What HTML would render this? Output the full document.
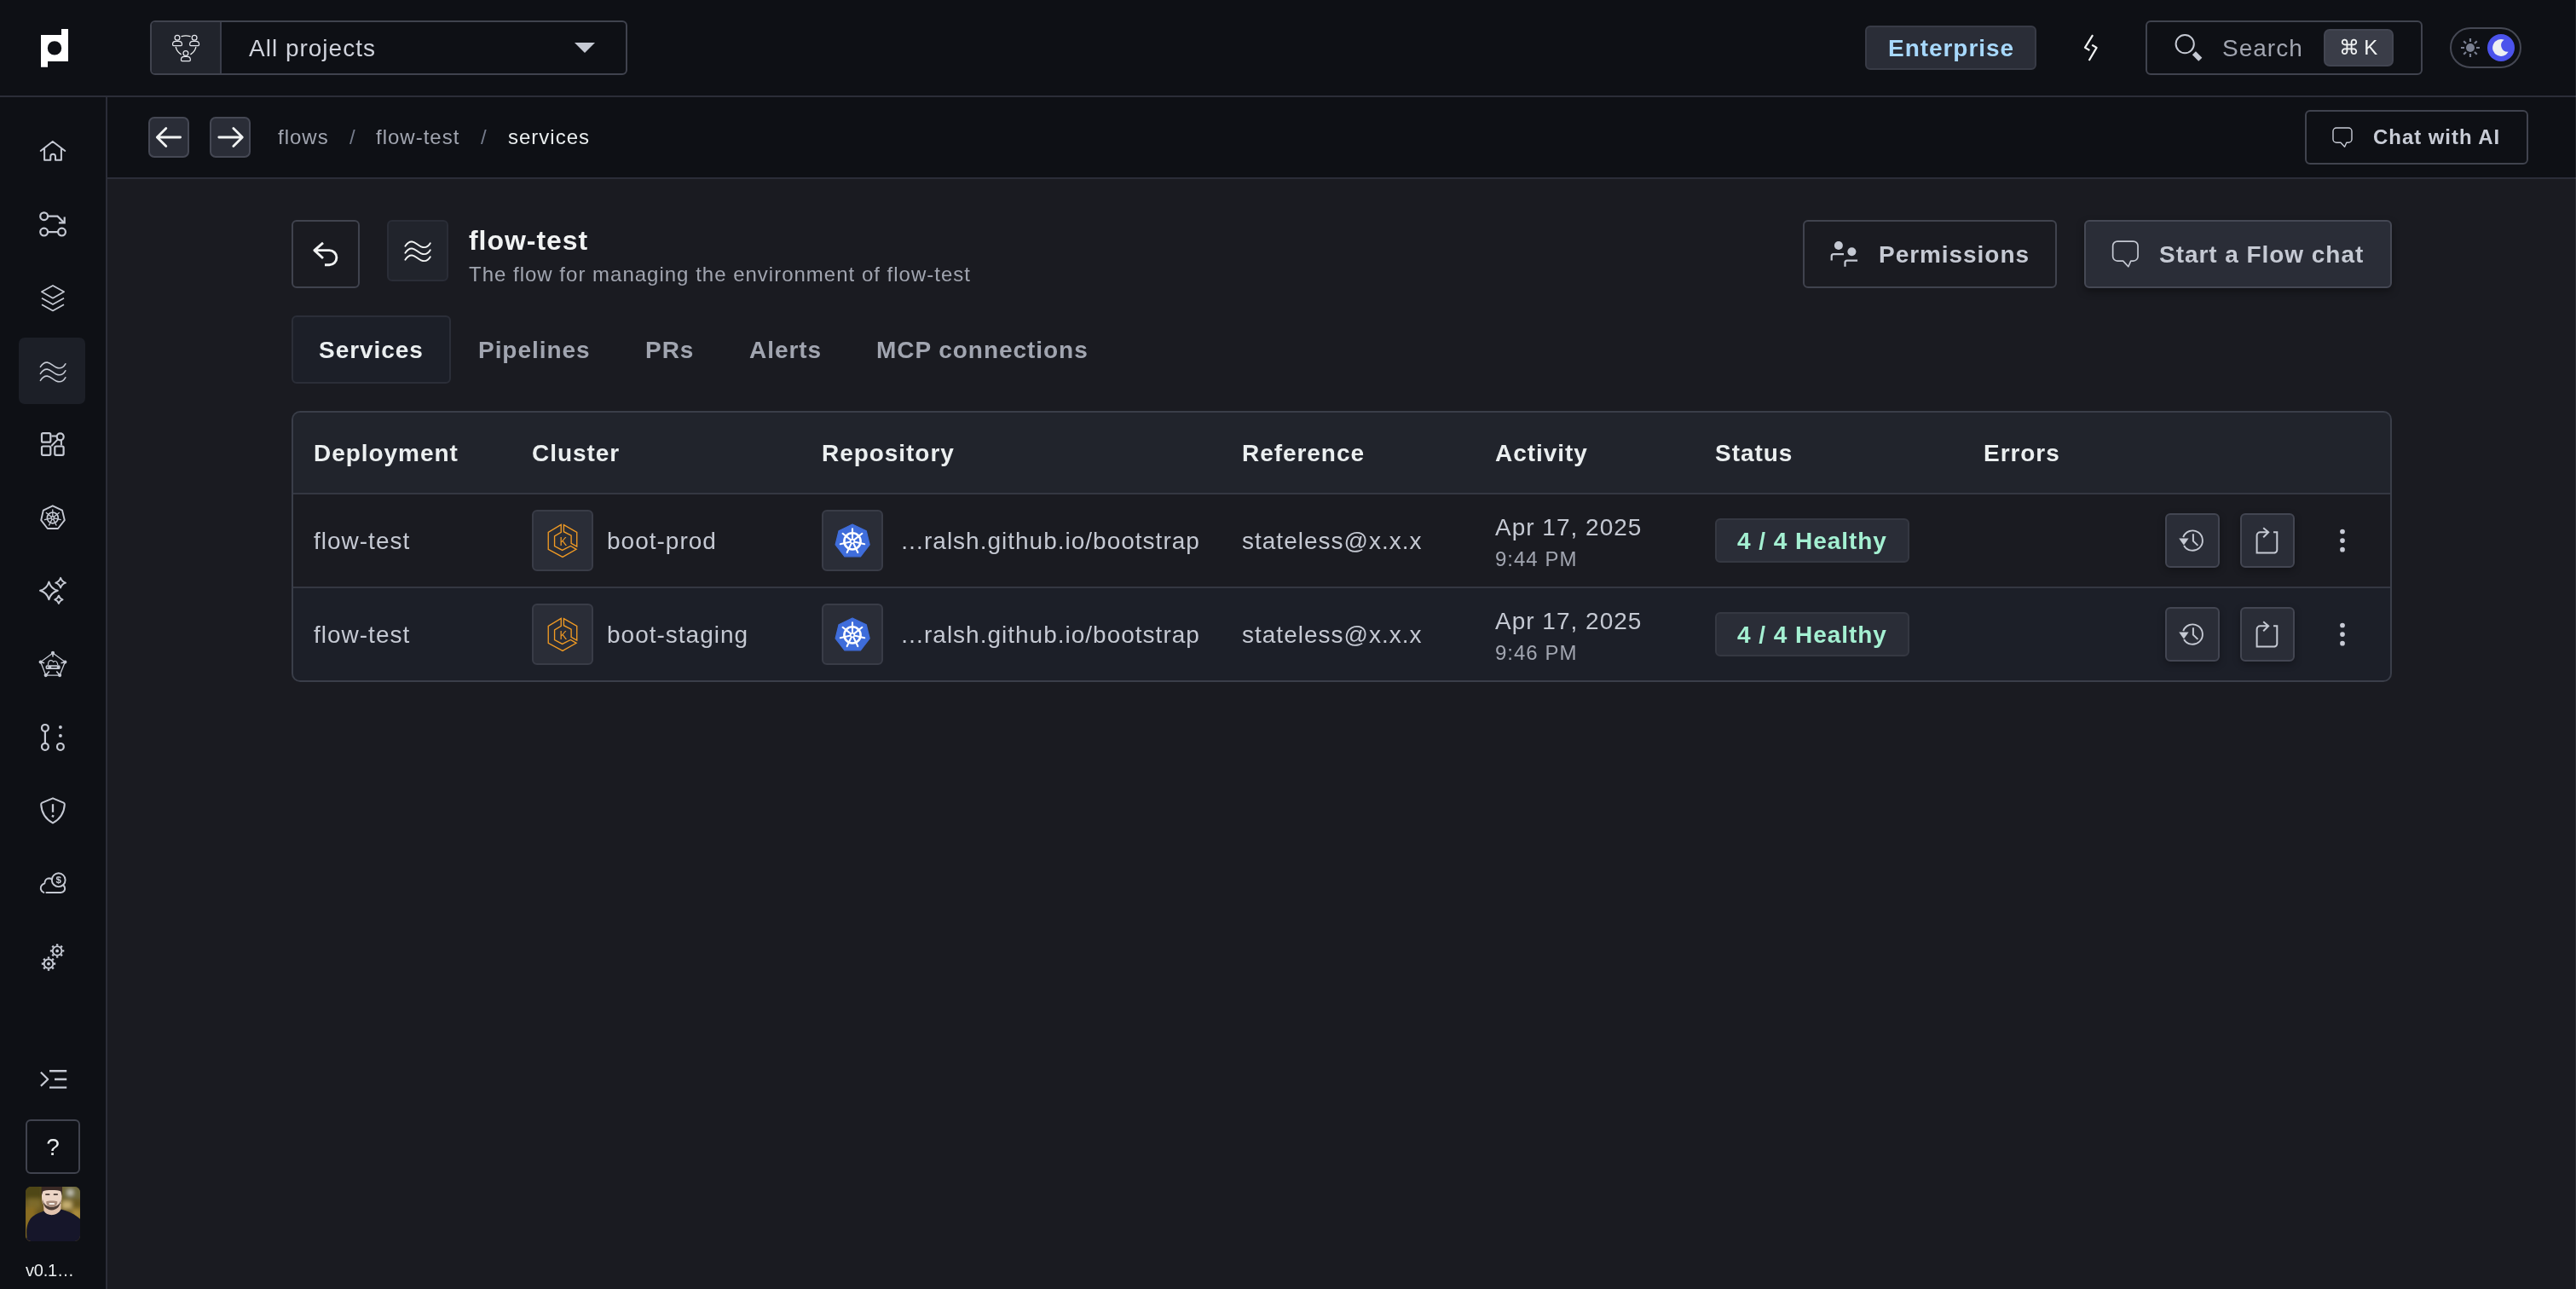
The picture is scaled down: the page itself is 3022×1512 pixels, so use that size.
<!DOCTYPE html>
<html lang="en">
<head>
<meta charset="utf-8">
<title>flow-test services</title>
<style>
html,body{margin:0;padding:0;background:#0e1015;}
body{width:3022px;height:1512px;overflow:hidden;position:relative;font-family:"Liberation Sans",sans-serif;letter-spacing:1px;color:#ebeff0;font-size:28px;}
*{box-sizing:border-box;}
.a{position:absolute;}
.t{will-change:transform;position:absolute;white-space:nowrap;line-height:40px;height:40px;}
.b{font-weight:bold;letter-spacing:0.95px;}
svg{position:absolute;overflow:visible;}
.ic{fill:none;stroke:#c5c9d3;stroke-width:1.1;stroke-linecap:round;stroke-linejoin:round;}
/* layout */
#header{left:0;top:0;width:3022px;height:114px;background:#0e1015;border-bottom:2px solid #2b2d38;}
#sidebar{left:0;top:114px;width:126px;height:1398px;background:#0e1015;border-right:2px solid #2b2d38;}
#subheader{left:126px;top:114px;width:2896px;height:96px;background:#0e1015;border-bottom:2px solid #2b2d38;}
#content{left:126px;top:210px;width:2896px;height:1302px;background:#1a1b21;}
.s24{font-size:24px;}
.nb{width:48px;height:48px;background:#2a2d37;border:2px solid #454854;border-radius:7px;}
.ib{width:72px;height:72px;background:#2a2d37;border:2px solid #393c47;border-radius:6px;}
.ab{width:64px;height:64px;background:#2a2d37;border:2px solid #434652;border-radius:6px;box-shadow:0 3px 8px rgba(0,0,0,.3);}
.box{position:absolute;border:2px solid #40434e;border-radius:6px;}
</style>
</head>
<body>
<div id="header" class="a"></div>
<div id="sidebar" class="a"></div>
<div id="subheader" class="a"></div>
<div id="content" class="a"></div>

<!-- HEADER -->
<svg style="left:48px;top:33.6px" width="32" height="44.8" viewBox="0 0 32 44.8"><path fill="#ffffff" fill-rule="evenodd" d="M24 0H32V38H8V44.8H0V7H24Z M7.8 22.4a8.2 8.2 0 1 0 16.4 0a8.2 8.2 0 1 0 -16.4 0Z"/></svg>
<div class="box" style="left:176px;top:24px;width:560px;height:64px;"></div>
<div class="a" style="left:178px;top:26px;width:80px;height:60px;background:#21242c;border-radius:4px 0 0 4px;"></div>
<div class="a" style="left:258px;top:26px;width:2px;height:60px;background:#3a3d49;"></div>
<div class="t" style="left:292px;top:37px;color:#d0d3dc;">All projects</div>
<svg style="left:674px;top:50px" width="24" height="12" viewBox="0 0 24 12"><path fill="#c5c9d3" d="M0 0H24L12 12Z"/></svg>

<div class="a" style="left:2188px;top:30px;width:201px;height:52px;background:#2a2d37;border:2px solid #383b46;border-radius:6px;"></div>
<div class="t b" style="left:2215px;top:37px;color:#a7d8fc;">Enterprise</div>
<div class="box" style="left:2517px;top:24px;width:325px;height:64px;"></div>
<div class="t" style="left:2607px;top:37px;color:#a1a5b0;">Search</div>
<div class="a" style="left:2726px;top:34px;width:82px;height:44px;background:#3a3d48;border:2px solid #424551;border-radius:7px;"></div>
<div class="t" style="left:2743.600px;top:35.800px;color:#f1f3f3;font-size:24px;word-spacing:-3.5px;">⌘ K</div>
<div class="a" style="left:2874px;top:32px;width:84px;height:48px;border:2px solid #454854;border-radius:24px;"></div>
<div class="a" style="left:2918px;top:40px;width:32px;height:32px;border-radius:16px;background:#4b53ec;"></div>
<!-- SIDEBAR -->
<div class="a" style="left:22px;top:396px;width:78px;height:78px;background:#1c1f27;border-radius:7px;"></div>
<div class="box" style="left:30px;top:1313px;width:64px;height:64px;"></div>
<div class="t" style="left:30px;top:1325.600px;width:64px;text-align:center;letter-spacing:0;color:#ebeff0;">?</div>
<svg style="left:30px;top:1392px" width="64" height="64" viewBox="0 0 64 64"><defs><clipPath id="avc"><rect width="64" height="64" rx="6.5"/></clipPath><filter id="avb" x="-20%" y="-20%" width="140%" height="140%"><feGaussianBlur stdDeviation="2.4"/></filter><filter id="avs" x="-10%" y="-10%" width="120%" height="120%"><feGaussianBlur stdDeviation="0.55"/></filter></defs><g clip-path="url(#avc)"><rect width="64" height="64" fill="#6a5620"/><g filter="url(#avb)"><rect x="-4" y="-4" width="24" height="20" fill="#4f4718"/><rect x="2" y="14" width="16" height="12" fill="#7d6a2c"/><rect x="-2" y="24" width="14" height="44" fill="#8a6d24"/><rect x="42" y="-4" width="26" height="18" fill="#6f6a3c"/><circle cx="52.500" cy="7" r="3.200" fill="#d8d8cc"/><rect x="44" y="14" width="24" height="14" fill="#6a5a22"/><rect x="42" y="17" width="12" height="9" fill="#c9b273"/><rect x="54" y="26" width="12" height="14" fill="#a98a3a"/></g><g filter="url(#avs)"><path d="M21 20L21.500 29C25 35.500 37.500 35.500 41.500 27L41.500 20Z" fill="#e2c3ae"/><path d="M-5 72L1.500 60C0 48 3 39 9 34.500C13 31.500 17 30 21.500 28.500C25 35 37.500 35 41.500 26.500C48 28.500 56 31 61 35.500C64 38 67 40 69 43V72Z" fill="#151929"/><path d="M19 0H42.500V12C42.500 21 38 27.200 30.600 27.200C23.500 27.200 19 21 19 12Z" fill="#ecd5c6"/><path d="M18.600 11V0H43V11L41.300 5.500C38 3.600 23.500 3.600 20.300 5.500Z" fill="#3a2c25"/><path d="M20 14.500C20.500 23 24.500 27.400 30.600 27.400C36.800 27.400 41 23 41.700 14.500C40.500 20.500 37 23.600 30.700 23.600C24.500 23.600 21.200 20.500 20 14.500Z" fill="#4d3e36"/><path d="M24.200 17.600C26 16.200 35.300 16.200 37.300 17.600C37.300 21.500 35 24 30.700 24C26.500 24 24.200 21.500 24.200 17.600Z" fill="#a88c7c"/><rect x="27.400" y="18.900" width="6.800" height="2.100" rx="1" fill="#f3eee8"/><rect x="23.300" y="8.300" width="5" height="1.600" fill="#3b2d27"/><rect x="32.800" y="8.300" width="5" height="1.600" fill="#3b2d27"/></g></g></svg>
<div class="t" style="left:30px;top:1470px;font-size:20px;letter-spacing:-0.2px;color:#ebeff0;">v0.1…</div>
<svg style="left:0;top:0" width="126" height="1512" viewBox="0 0 126 1512"><path d="M47.7 177L61.8 166L76.3 177M52.1 174V187.8H59.3V183.6a2.85 2.85 0 0 1 5.7 0V187.8H71.9V174" fill="none" stroke="#c5c9d3" stroke-width="2.0" stroke-linejoin="round" stroke-linecap="round"/>
<g fill="none" stroke="#c5c9d3" stroke-width="2.2"><circle cx="51.65" cy="253.7" r="4.4"/><circle cx="51.65" cy="272.1" r="4.4"/><circle cx="72.5" cy="272.1" r="4.4"/><path d="M56 272.1H68.1M56 253.7H67.5L74.9 261"/><path d="M75.7 254.6V261.4H68.9" stroke-linejoin="miter"/></g>
<path d="M62 334.9L75.1 342.3L62 349.7L48.9 342.3Z" fill="none" stroke="#c5c9d3" stroke-width="1.7" stroke-linejoin="round" />
<path d="M49 349.8L62 357.1L75 349.8M49 357.2L62 364.5L75 357.2" fill="none" stroke="#c5c9d3" stroke-width="1.7" stroke-linejoin="round" />
<path d="M47.4 430.3C50 426.1 53 424.90000000000003 55.5 425.1C59 425.40000000000003 62 429.1 66 430.90000000000003C70 432.6 74 431.6 76.8 426.8M47.4 438.3C50 434.1 53 432.90000000000003 55.5 433.1C59 433.40000000000003 62 437.1 66 438.90000000000003C70 440.6 74 439.6 76.8 434.8M47.4 446.3C50 442.1 53 440.90000000000003 55.5 441.1C59 441.40000000000003 62 445.1 66 446.90000000000003C70 448.6 74 447.6 76.8 442.8" fill="none" stroke="#c5c9d3" stroke-width="1.6" stroke-linejoin="round" stroke-linecap="round"/>
<g fill="none" stroke="#c5c9d3" stroke-width="2.2"><rect x="49" y="508.2" width="10.3" height="10.5" rx="1.5"/><rect x="49" y="523.5" width="10.3" height="10.3" rx="1.5"/><rect x="64.3" y="523.5" width="10.3" height="10.3" rx="1.5"/><circle cx="70.7" cy="512.3" r="4"/><path d="M60.4 511.6H66.7M67.6 515.6L60.2 523.2M71.9 516.3V522.4" stroke-width="2"/></g>
<path d="M61.8 593.3L73 598.6L75.8 610.2L68 620H55.8L48.2 610.2L50.8 598.6Z" fill="none" stroke="#c5c9d3" stroke-width="1.9" stroke-linejoin="round" />
<circle cx="61.8" cy="607.4" r="6.4" fill="none" stroke="#c5c9d3" stroke-width="1.7"/><path d="M61.8 607.4L61.80 597.80M61.8 607.4L69.31 601.41M61.8 607.4L71.16 609.54M61.8 607.4L65.97 616.05M61.8 607.4L57.63 616.05M61.8 607.4L52.44 609.54M61.8 607.4L54.29 601.41" stroke="#c5c9d3" stroke-width="1.3" stroke-linecap="round" fill="none"/><circle cx="61.8" cy="607.4" r="2.3" fill="#c5c9d3"/><circle cx="61.8" cy="607.4" r="1.0" fill="#0e1015"/>
<path d="M57.4 682.4Q59.69 690.51 67.8 692.8Q59.69 695.09 57.4 703.1999999999999Q55.11 695.09 47.0 692.8Q55.11 690.51 57.4 682.4Z" fill="none" stroke="#c5c9d3" stroke-width="2.0" stroke-linejoin="round" />
<path d="M71.1 677.8000000000001Q72.40 682.40 77.0 683.7Q72.40 685.00 71.1 689.6Q69.80 685.00 65.19999999999999 683.7Q69.80 682.40 71.1 677.8000000000001Z" fill="none" stroke="#c5c9d3" stroke-width="1.9" stroke-linejoin="round" />
<path d="M68.9 698.5999999999999Q69.93 702.27 73.60000000000001 703.3Q69.93 704.33 68.9 708.0Q67.87 704.33 64.2 703.3Q67.87 702.27 68.9 698.5999999999999Z" fill="none" stroke="#c5c9d3" stroke-width="1.9" stroke-linejoin="round" />
<path d="M62 765.9L76.3 776.6L70.1 792.1L53.7 792.1L47.7 776.6Z" fill="none" stroke="#c5c9d3" stroke-width="1.3" stroke-linejoin="round" />
<path d="M62 765.9L62 770.6M76.3 776.6L71.5 777.8M70.1 792.1L66.3 787.5M53.7 792.1L57.8 787.5M47.7 776.6L52.1 777.8" fill="none" stroke="#c5c9d3" stroke-width="1.6" stroke-linejoin="round" />
<circle cx="62" cy="765.9" r="2.1" fill="#c5c9d3"/><circle cx="76.3" cy="776.6" r="2.1" fill="#c5c9d3"/><circle cx="70.1" cy="792.1" r="2.1" fill="#c5c9d3"/><circle cx="53.7" cy="792.1" r="2.1" fill="#c5c9d3"/><circle cx="47.7" cy="776.6" r="2.1" fill="#c5c9d3"/>
<rect x="53.6" y="780.2" width="17" height="4.8" rx="1.6" fill="#c5c9d3"/><rect x="60.2" y="781.9" width="6.6" height="1.3" fill="#0e1015"/><circle cx="55.8" cy="782.6" r="0.8" fill="#0e1015"/>
<path d="M56.4 780C56.4 776 58 774.3 60.2 774.6C61.5 774.8 62.3 775.8 62.6 776.6C63.6 775.2 66 775 66.9 777C67.5 778.2 67.7 779.2 67.8 780" fill="none" stroke="#c5c9d3" stroke-width="1.2" stroke-linejoin="round" />
<g fill="none" stroke="#c5c9d3" stroke-width="2.2"><circle cx="52.9" cy="853.9" r="3.9"/><circle cx="52.9" cy="875.9" r="3.9"/><circle cx="70.9" cy="875.9" r="3.9"/><path d="M52.9 857.8V872"/></g><circle cx="70.9" cy="853" r="2" fill="#c5c9d3"/><circle cx="70.9" cy="863" r="2" fill="#c5c9d3"/>
<path d="M62 936.3L74.6 941.7Q75.9 942.3 75.8 943.6C75.2 954 70 961 62 965.4C54 961 48.8 954 48.2 943.6Q48.1 942.3 49.4 941.7Z" fill="none" stroke="#c5c9d3" stroke-width="2.0" stroke-linejoin="round" />
<path d="M62 943.2V952.8" fill="none" stroke="#c5c9d3" stroke-width="2.3" stroke-linejoin="round" />
<rect x="60.7" y="956" width="2.6" height="2.6" fill="#c5c9d3" transform="rotate(20 62 957.3)"/>
<circle cx="68.7" cy="1032.2" r="7.9" fill="none" stroke="#c5c9d3" stroke-width="1.9"/>
<path d="M51.3 1046.9C47.6 1045.5 46.6 1041 49 1038.4C50 1037.2 51.2 1036.6 52.3 1036.3C52.4 1032.8 54.8 1030.4 57.6 1030.3C58.6 1030.3 59.6 1030.6 60.4 1031.1M54.4 1046.9H71.2C75 1046.9 77 1043.6 75.8 1040.6C75.5 1039.8 75 1039.2 74.5 1038.7" fill="none" stroke="#c5c9d3" stroke-width="2.0" stroke-linejoin="round" stroke-linecap="round"/>
<text x="68.7" y="1036.2" font-family="Liberation Sans, sans-serif" font-size="11.5" font-weight="bold" fill="#c5c9d3" text-anchor="middle" letter-spacing="0">$</text>
<circle cx="67.1" cy="1115.4" r="5.3" fill="none" stroke="#c5c9d3" stroke-width="1.9"/><circle cx="67.1" cy="1115.4" r="1.9" fill="#c5c9d3"/><path d="M67.10 1109.40L67.10 1107.20M71.34 1111.16L72.90 1109.60M73.10 1115.40L75.30 1115.40M71.34 1119.64L72.90 1121.20M67.10 1121.40L67.10 1123.60M62.86 1119.64L61.30 1121.20M61.10 1115.40L58.90 1115.40M62.86 1111.16L61.30 1109.60" stroke="#c5c9d3" stroke-width="2.4" fill="none"/>
<circle cx="57.0" cy="1130.5" r="5.3" fill="none" stroke="#c5c9d3" stroke-width="1.9"/><circle cx="57.0" cy="1130.5" r="1.9" fill="#c5c9d3"/><path d="M57.00 1124.50L57.00 1122.30M61.24 1126.26L62.80 1124.70M63.00 1130.50L65.20 1130.50M61.24 1134.74L62.80 1136.30M57.00 1136.50L57.00 1138.70M52.76 1134.74L51.20 1136.30M51.00 1130.50L48.80 1130.50M52.76 1126.26L51.20 1124.70" stroke="#c5c9d3" stroke-width="2.4" fill="none"/>
<path d="M47.9 1257.7L56.2 1266L47.9 1273.9" fill="none" stroke="#c5c9d3" stroke-width="2.2" stroke-linejoin="round" />
<path d="M58 1256.3H78.2M64 1266H78.2M58 1275.6H78.2" fill="none" stroke="#c5c9d3" stroke-width="2.4" stroke-linejoin="round" /></svg>
<!-- SUBHEADER -->
<div class="a nb" style="left:174px;top:137px;"></div>
<div class="a nb" style="left:246px;top:137px;"></div>
<svg style="left:0;top:114px" width="400" height="96" viewBox="0 114 400 96"><path d="M211.6 161H185M194.8 150.500L184.300 161L194.800 171.500M256.8 161H283.4M273.800 150.500L284.300 161L273.800 171.500" fill="none" stroke="#f1f3f3" stroke-width="2.8" stroke-linecap="round" stroke-linejoin="round"/></svg>
<div class="t s24" style="left:326px;top:141.4px;color:#a1a5b0;">flows</div>
<div class="t s24" style="left:410px;top:141px;color:#747b8b;">/</div>
<div class="t s24" style="left:441px;top:141.4px;color:#a1a5b0;">flow-test</div>
<div class="t s24" style="left:564px;top:141px;color:#747b8b;">/</div>
<div class="t s24" style="left:595.5px;top:141.4px;color:#ebeff0;">services</div>
<div class="box" style="left:2704px;top:129px;width:262px;height:64px;"></div>
<div class="t b s24" style="left:2784.4px;top:141px;color:#c8ccd6;">Chat with AI</div>
<!-- PAGE -->
<div class="box" style="left:342px;top:258px;width:80px;height:80px;"></div>
<div class="a" style="left:454px;top:258px;width:72px;height:72px;background:#21242c;border:2px solid #2a2d37;border-radius:6px;"></div>
<div class="t b" style="left:550px;top:262px;font-size:32px;color:#f1f3f3;">flow-test</div>
<div class="t s24" style="left:550px;top:302px;color:#a1a5b0;">The flow for managing the environment of flow-test</div>
<div class="box" style="left:2115px;top:258px;width:298px;height:80px;"></div>
<div class="t b" style="left:2204px;top:278.5px;color:#c5c9d3;">Permissions</div>
<div class="a" style="left:2445px;top:258px;width:361px;height:80px;background:#2a2d37;border:2px solid #454854;border-radius:6px;box-shadow:0 4px 10px rgba(0,0,0,.35);"></div>
<div class="t b" style="left:2533.3px;top:278.5px;color:#c5c9d3;">Start a Flow chat</div>
<!-- tabs -->
<div class="a" style="left:342px;top:370px;width:187px;height:80px;background:#1c1f28;border:2px solid #2b2e38;border-radius:6px;"></div>
<div class="t b" style="left:374px;top:390.5px;color:#ebeff0;">Services</div>
<div class="t b" style="left:561px;top:390.5px;color:#a1a5b0;">Pipelines</div>
<div class="t b" style="left:757px;top:390.5px;color:#a1a5b0;">PRs</div>
<div class="t b" style="left:879px;top:390.5px;color:#a1a5b0;">Alerts</div>
<div class="t b" style="left:1028px;top:390.5px;color:#a1a5b0;">MCP connections</div>
<!-- TABLE -->
<div class="a" style="left:342px;top:482px;width:2464px;height:318px;background:#3a3e49;border-radius:10px;"></div>
<div class="a" style="left:344px;top:484px;width:2460px;height:314px;background:#343742;border-radius:8px;overflow:hidden;" id="tbl"></div>
<div class="a" style="left:344px;top:484px;width:2460px;height:94px;background:#21242c;border-radius:8px 8px 0 0;"></div>
<div class="t b" style="left:368px;top:512px;">Deployment</div>
<div class="t b" style="left:624px;top:512px;">Cluster</div>
<div class="t b" style="left:964px;top:512px;">Repository</div>
<div class="t b" style="left:1457px;top:512px;">Reference</div>
<div class="t b" style="left:1754px;top:512px;">Activity</div>
<div class="t b" style="left:2012px;top:512px;">Status</div>
<div class="t b" style="left:2327px;top:512px;">Errors</div>

<div class="a" style="left:344px;top:580px;width:2460px;height:108px;background:#1a1b21;"></div>
<div class="t" style="left:368px;top:615px;color:#c5c9d3;">flow-test</div>
<div class="a ib" style="left:624px;top:598px;"></div>
<div class="t" style="left:712px;top:615px;color:#c5c9d3;">boot-prod</div>
<div class="a ib" style="left:964px;top:598px;"></div>
<div class="t" style="left:1056px;top:615px;color:#c5c9d3;"><span style="letter-spacing:0">…</span>ralsh.github.io/bootstrap</div>
<div class="t" style="left:1457px;top:615px;color:#c5c9d3;">stateless@x.x.x</div>
<div class="t" style="left:1754px;top:599px;color:#c5c9d3;">Apr 17, 2025</div>
<div class="t s24" style="left:1754px;top:636px;color:#a1a5b0;">9:44 PM</div>
<div class="a" style="left:2012px;top:608px;width:228px;height:52px;background:#2a2d37;border:2px solid #353842;border-radius:6px;"></div>
<div class="t b" style="left:2038px;top:615px;color:#a4f0d2;">4 / 4 Healthy</div>
<div class="a ab" style="left:2540px;top:602px;"></div>
<div class="a ab" style="left:2628px;top:602px;"></div>

<div class="a" style="left:344px;top:690px;width:2460px;height:108px;background:#1c1f28;border-radius:0 0 8px 8px;"></div>
<div class="t" style="left:368px;top:725px;color:#c5c9d3;">flow-test</div>
<div class="a ib" style="left:624px;top:708px;"></div>
<div class="t" style="left:712px;top:725px;color:#c5c9d3;">boot-staging</div>
<div class="a ib" style="left:964px;top:708px;"></div>
<div class="t" style="left:1056px;top:725px;color:#c5c9d3;"><span style="letter-spacing:0">…</span>ralsh.github.io/bootstrap</div>
<div class="t" style="left:1457px;top:725px;color:#c5c9d3;">stateless@x.x.x</div>
<div class="t" style="left:1754px;top:709px;color:#c5c9d3;">Apr 17, 2025</div>
<div class="t s24" style="left:1754px;top:746px;color:#a1a5b0;">9:46 PM</div>
<div class="a" style="left:2012px;top:718px;width:228px;height:52px;background:#2a2d37;border:2px solid #353842;border-radius:6px;"></div>
<div class="t b" style="left:2038px;top:725px;color:#a4f0d2;">4 / 4 Healthy</div>
<div class="a ab" style="left:2540px;top:712px;"></div>
<div class="a ab" style="left:2628px;top:712px;"></div>
<svg style="left:0;top:0" width="3022" height="820" viewBox="0 0 3022 820"><circle cx="208" cy="44.3" r="2.9" fill="none" stroke="#e6e8ee" stroke-width="1.25"/><path d="M203.7 53.599999999999994Q202.6 53.599999999999994 202.6 52.5V51.5C202.6 49.5 204.2 48.3 206.4 48.3H209.6C211.8 48.3 213.4 49.5 213.4 51.5V52.5Q213.4 53.599999999999994 212.3 53.599999999999994Z" fill="none" stroke="#e6e8ee" stroke-width="1.25" stroke-linejoin="round"/>
<circle cx="228.1" cy="44.3" r="2.9" fill="none" stroke="#e6e8ee" stroke-width="1.25"/><path d="M223.79999999999998 53.599999999999994Q222.7 53.599999999999994 222.7 52.5V51.5C222.7 49.5 224.29999999999998 48.3 226.5 48.3H229.7C231.9 48.3 233.5 49.5 233.5 51.5V52.5Q233.5 53.599999999999994 232.4 53.599999999999994Z" fill="none" stroke="#e6e8ee" stroke-width="1.25" stroke-linejoin="round"/>
<circle cx="217.9" cy="62.4" r="2.9" fill="none" stroke="#e6e8ee" stroke-width="1.25"/><path d="M213.6 71.7Q212.5 71.7 212.5 70.6V69.6C212.5 67.6 214.1 66.4 216.3 66.4H219.5C221.70000000000002 66.4 223.3 67.6 223.3 69.6V70.6Q223.3 71.7 222.20000000000002 71.7Z" fill="none" stroke="#e6e8ee" stroke-width="1.25" stroke-linejoin="round"/>
<path d="M213 42.6Q218 41.2 223.1 42.6" fill="none" stroke="#f1f3f3" stroke-width="1.3" stroke-linejoin="round" stroke-linecap="round"/>
<path d="M206.3 55.3Q207.5 60.5 212.2 63.6" fill="none" stroke="#f1f3f3" stroke-width="1.3" stroke-linejoin="round" stroke-linecap="round"/>
<path d="M229.8 55.3Q228.6 60.5 223.8 63.6" fill="none" stroke="#f1f3f3" stroke-width="1.3" stroke-linejoin="round" stroke-linecap="round"/>
<path d="M2455.1 41.1L2446 55.9L2451.4 59" fill="none" stroke="#f1f3f3" stroke-width="2.2" stroke-linejoin="round" stroke-linejoin="miter"/>
<path d="M2454.2 52.8L2459.6 55.9L2450.7 71" fill="none" stroke="#f1f3f3" stroke-width="2.2" stroke-linejoin="round" stroke-linejoin="miter"/>
<circle cx="2563.2" cy="51.6" r="10.6" fill="none" stroke="#c5c9d3" stroke-width="2"/>
<path d="M2573.9 62.3L2581.3 69.7" fill="none" stroke="#c5c9d3" stroke-width="5.8" stroke-linejoin="round" />
<circle cx="2898" cy="56" r="5" fill="#7a8092"/>
<path d="M2905.00 56.00L2909.00 56.00M2902.95 60.95L2905.78 63.78M2898.00 63.00L2898.00 67.00M2893.05 60.95L2890.22 63.78M2891.00 56.00L2887.00 56.00M2893.05 51.05L2890.22 48.22M2898.00 49.00L2898.00 45.00M2902.95 51.05L2905.78 48.22" fill="none" stroke="#7a8092" stroke-width="2.2" stroke-linejoin="round" />
<path d="M2937.7 46.8A9.9 9.9 0 1 0 2942.7 60.8A7.64 7.64 0 0 1 2937.7 46.8Z" fill="#eef0f2"/>
<path d="M2741.00 150.00H2755.00a4 4 0 0 1 4 4V163.20a4 4 0 0 1 -4 4H2752.80L2750.60 172.20L2746.00 167.20H2741.00a4 4 0 0 1 -4 -4V154.00a4 4 0 0 1 4 -4Z" fill="none" stroke="#c8ccd6" stroke-width="1.4" stroke-linejoin="round" />
<path d="M2483.99 283.07H2502.71a5.3500000000000005 5.3500000000000005 0 0 1 5.3500000000000005 5.3500000000000005V300.73a5.3500000000000005 5.3500000000000005 0 0 1 -5.3500000000000005 5.3500000000000005H2499.77L2496.83 312.77L2490.68 306.08H2483.99a5.3500000000000005 5.3500000000000005 0 0 1 -5.3500000000000005 -5.3500000000000005V288.42a5.3500000000000005 5.3500000000000005 0 0 1 5.3500000000000005 -5.3500000000000005Z" fill="none" stroke="#c5c9d3" stroke-width="1.7" stroke-linejoin="round" />
<path d="M379 284.9L368.9 293.6L379 303M369.4 293.6H386.3A8.55 8.55 0 0 1 386.3 310.7H381" fill="none" stroke="#f1f3f3" stroke-width="2.9" stroke-linejoin="round" />
<path d="M475.4 288.7C478 284.5 481 283.3 483.5 283.5C487 283.8 490 287.5 494 289.3C498 291 502 290 504.8 285.2M475.4 296.7C478 292.5 481 291.3 483.5 291.5C487 291.8 490 295.5 494 297.3C498 299 502 298 504.8 293.2M475.4 304.7C478 300.5 481 299.3 483.5 299.5C487 299.8 490 303.5 494 305.3C498 307 502 306 504.8 301.2" fill="none" stroke="#f1f3f3" stroke-width="1.9" stroke-linejoin="round" stroke-linecap="round"/>
<circle cx="2156.9" cy="288" r="5" fill="#c5c9d3"/><circle cx="2172.4" cy="295.2" r="5" fill="#c5c9d3"/>
<path d="M2163 298.2H2151.2a2.5 2.5 0 0 0 -2.5 2.5V305.6M2179.1 305.6H2167a2.5 2.5 0 0 0 -2.5 2.5V312.8" fill="none" stroke="#c5c9d3" stroke-width="2.2" stroke-linejoin="round" />
<path d="M658.25 615.34L643.23 624.42L643.23 644.32L660.00 653.40L676.06 644.32L669.42 640.48L659.65 645.37L650.57 640.48L650.57 628.96L658.25 624.42ZM661.39 615.69L676.75 624.42L676.75 641.18L670.12 637.34L670.12 628.26L661.39 623.72Z" fill="none" stroke="#f09a24" stroke-width="1.35" stroke-linejoin="miter"/><text transform="translate(656.4 640.2) scale(0.84 1)" font-family="Liberation Sans, sans-serif" font-size="15.4" fill="#f09a24" letter-spacing="0">K</text><path d="M1000.00 615.00L1016.30 622.80L1020.20 639.00L1009.50 652.80L990.90 652.80L980.10 639.00L984.00 622.80Z" fill="#3f6ddb" stroke="#3f6ddb" stroke-width="1.2" stroke-linejoin="round"/><circle cx="1000" cy="634.9" r="9.6" fill="none" stroke="#fff" stroke-width="2.6"/><path d="M1000 634.9L1000.00 620.30M1000 634.9L1011.41 625.80M1000 634.9L1014.23 638.15M1000 634.9L1006.33 648.05M1000 634.9L993.67 648.05M1000 634.9L985.77 638.15M1000 634.9L988.59 625.80" stroke="#fff" stroke-width="2.1" stroke-linecap="round" fill="none"/><circle cx="1000" cy="634.9" r="3.1" fill="#fff"/><circle cx="1000" cy="634.9" r="1.5" fill="#3f6ddb"/><path d="M2561.21 630.10A11.7 11.7 0 1 1 2562.07 639.95" fill="none" stroke="#c5c9d3" stroke-width="1.9"/><path d="M2556.2 631.4H2567.6L2561.9 639.6Z" fill="#c5c9d3"/><path d="M2572.9 626.3V634.6L2578.4 639.9" fill="none" stroke="#c5c9d3" stroke-width="2"/><path d="M2660.5 624.3H2651.6a4 4 0 0 0 -4 4V648.5H2667.8a3.5 3.5 0 0 0 3.5 -3.5V624.3H2667M2655.2 619.2L2661.2 624.3L2655.2 630.3" fill="none" stroke="#c5c9d3" stroke-width="2" stroke-linejoin="miter"/><circle cx="2748" cy="623.5" r="2.85" fill="#c8cbd6"/><circle cx="2748" cy="634.1" r="2.85" fill="#c8cbd6"/><circle cx="2748" cy="644.7" r="2.85" fill="#c8cbd6"/>
<path d="M658.25 725.34L643.23 734.42L643.23 754.32L660.00 763.40L676.06 754.32L669.42 750.48L659.65 755.37L650.57 750.48L650.57 738.96L658.25 734.42ZM661.39 725.69L676.75 734.42L676.75 751.18L670.12 747.34L670.12 738.26L661.39 733.72Z" fill="none" stroke="#f09a24" stroke-width="1.35" stroke-linejoin="miter"/><text transform="translate(656.4 750.2) scale(0.84 1)" font-family="Liberation Sans, sans-serif" font-size="15.4" fill="#f09a24" letter-spacing="0">K</text><path d="M1000.00 725.00L1016.30 732.80L1020.20 749.00L1009.50 762.80L990.90 762.80L980.10 749.00L984.00 732.80Z" fill="#3f6ddb" stroke="#3f6ddb" stroke-width="1.2" stroke-linejoin="round"/><circle cx="1000" cy="744.9" r="9.6" fill="none" stroke="#fff" stroke-width="2.6"/><path d="M1000 744.9L1000.00 730.30M1000 744.9L1011.41 735.80M1000 744.9L1014.23 748.15M1000 744.9L1006.33 758.05M1000 744.9L993.67 758.05M1000 744.9L985.77 748.15M1000 744.9L988.59 735.80" stroke="#fff" stroke-width="2.1" stroke-linecap="round" fill="none"/><circle cx="1000" cy="744.9" r="3.1" fill="#fff"/><circle cx="1000" cy="744.9" r="1.5" fill="#3f6ddb"/><path d="M2561.21 740.10A11.7 11.7 0 1 1 2562.07 749.95" fill="none" stroke="#c5c9d3" stroke-width="1.9"/><path d="M2556.2 741.4H2567.6L2561.9 749.6Z" fill="#c5c9d3"/><path d="M2572.9 736.3V744.6L2578.4 749.9" fill="none" stroke="#c5c9d3" stroke-width="2"/><path d="M2660.5 734.3H2651.6a4 4 0 0 0 -4 4V758.5H2667.8a3.5 3.5 0 0 0 3.5 -3.5V734.3H2667M2655.2 729.2L2661.2 734.3L2655.2 740.3" fill="none" stroke="#c5c9d3" stroke-width="2" stroke-linejoin="miter"/><circle cx="2748" cy="733.5" r="2.85" fill="#c8cbd6"/><circle cx="2748" cy="744.1" r="2.85" fill="#c8cbd6"/><circle cx="2748" cy="754.7" r="2.85" fill="#c8cbd6"/></svg>
<div class="a" style="left:3021px;top:0;width:1px;height:1512px;background:rgba(255,255,255,.085);"></div>
</body>
</html>
